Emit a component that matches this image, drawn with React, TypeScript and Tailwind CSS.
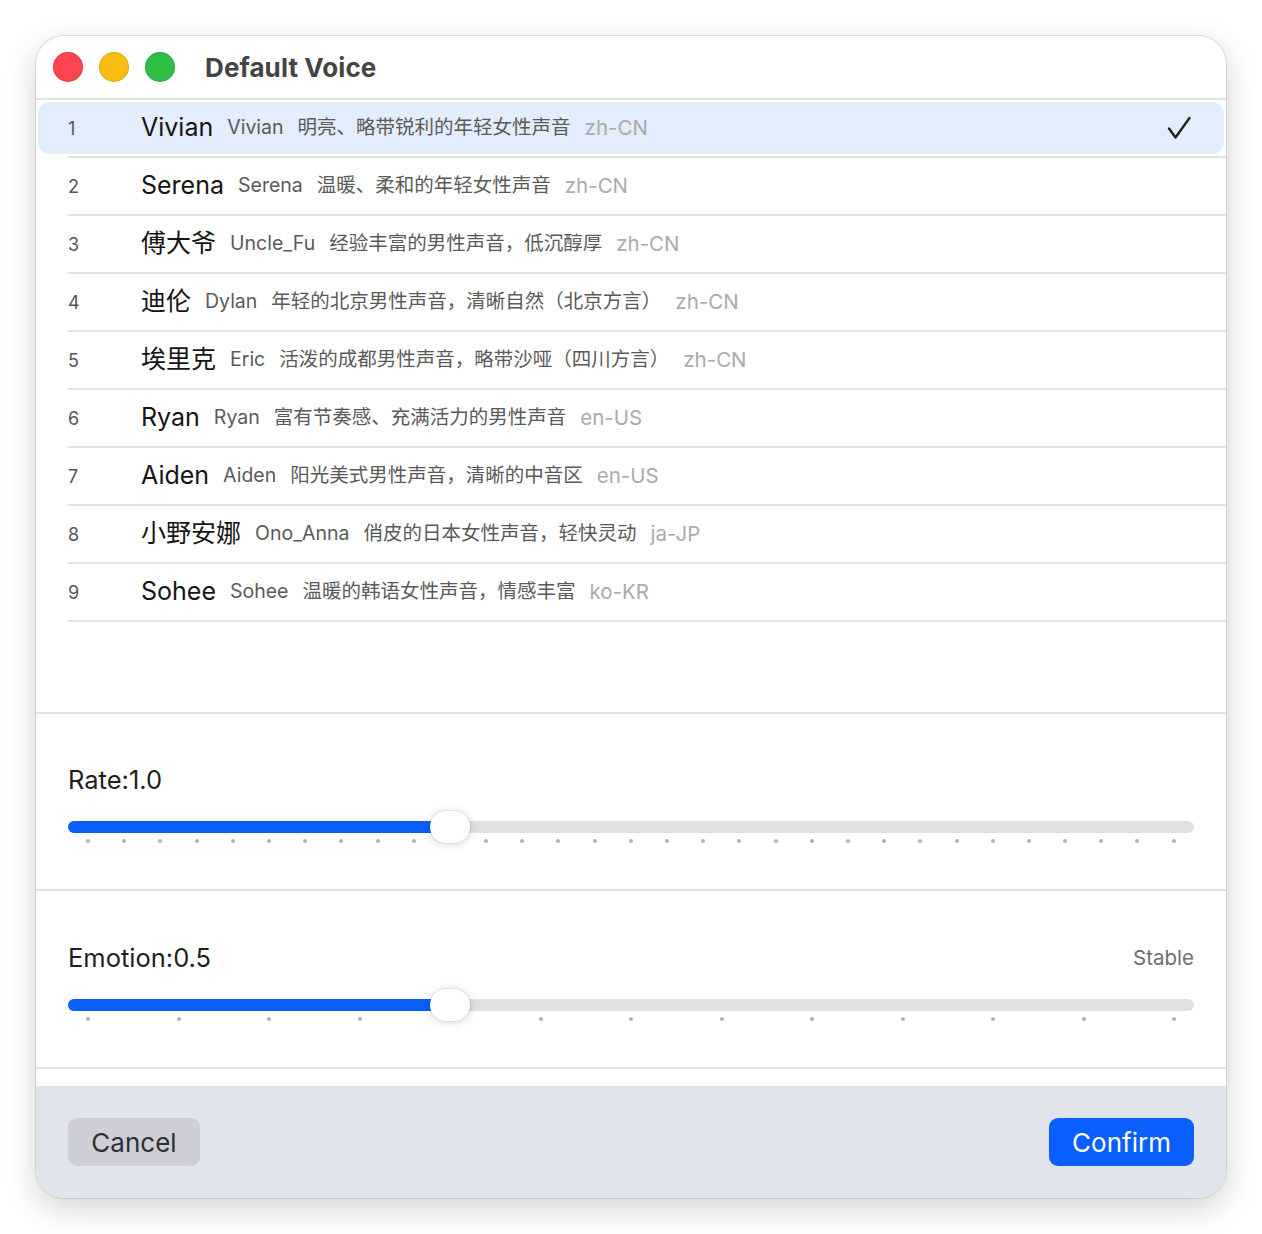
import React from "react";

type Voice = {
    name: string;
    id: string;
    desc: string;
    lang: string;
};

const voices: Voice[] = [
    { name: "Vivian", id: "Vivian", desc: "明亮、略带锐利的年轻女性声音", lang: "zh-CN" },
    { name: "Serena", id: "Serena", desc: "温暖、柔和的年轻女性声音", lang: "zh-CN" },
    { name: "傅大爷", id: "Uncle_Fu", desc: "经验丰富的男性声音，低沉醇厚", lang: "zh-CN" },
    { name: "迪伦", id: "Dylan", desc: "年轻的北京男性声音，清晰自然（北京方言）", lang: "zh-CN" },
    { name: "埃里克", id: "Eric", desc: "活泼的成都男性声音，略带沙哑（四川方言）", lang: "zh-CN" },
    { name: "Ryan", id: "Ryan", desc: "富有节奏感、充满活力的男性声音", lang: "en-US" },
    { name: "Aiden", id: "Aiden", desc: "阳光美式男性声音，清晰的中音区", lang: "en-US" },
    { name: "小野安娜", id: "Ono_Anna", desc: "俏皮的日本女性声音，轻快灵动", lang: "ja-JP" },
    { name: "Sohee", id: "Sohee", desc: "温暖的韩语女性声音，情感丰富", lang: "ko-KR" },
];

const font = { fontFamily: '"Inter", "Noto Sans CJK SC", sans-serif' };

function Slider({ ticks, value }: { ticks: number; value: number }) {
    // track is 1126 wide, thumb 40 wide -> usable 1086
    const center = 20 + value * 1086;
    return (
        <div className="relative h-[32px] w-full">
            <div className="absolute left-0 right-0 top-[10px] h-[12px] rounded-full bg-[#e0e0e0]"></div>
            <div className="absolute left-0 top-[10px] h-[12px] rounded-l-full bg-[#0a5ffb]" style={{ width: center }}></div>
            <div className="absolute left-[18px] right-[18px] top-[28px] flex justify-between">
                {Array.from({ length: ticks }).map((_, i) => (
                    <span key={i} className="block h-[4px] w-[4px] rounded-full bg-[#b3b3b3]"></span>
                ))}
            </div>
            <div
                className="absolute top-0 h-[32px] w-[40px] rounded-full bg-white shadow-[0_1px_8px_rgba(0,0,0,0.18)] ring-1 ring-black/5"
                style={{ left: center - 20 }}
            ></div>
        </div>
    );
}

export default function App() {
    return (
        <div className="h-[1234px] w-full bg-white p-[36px]" style={font}>
            <div className="flex h-[1162px] w-[1190px] flex-col overflow-hidden rounded-[28px] bg-white shadow-[0_10px_32px_rgba(0,0,0,0.18)] ring-1 ring-black/10">
                {/* title bar */}
                <div className="flex h-[64px] shrink-0 items-center border-b-2 border-[#e2e2e2] pl-[18px]">
                    <div className="flex gap-[18px]">
                        <span className="block h-[28px] w-[28px] rounded-full bg-[#fe4450] ring-1 ring-[#e23540]"></span>
                        <span className="block h-[28px] w-[28px] rounded-full bg-[#f8bc12] ring-1 ring-[#e0a90c]"></span>
                        <span className="block h-[28px] w-[28px] rounded-full bg-[#2ebe46] ring-1 ring-[#22a83a]"></span>
                    </div>
                    <span className="ml-[31px] text-[26px] font-bold tracking-[0.1px] text-[#444]">Default Voice</span>
                </div>

                {/* voice list */}
                <div className="h-[612px] shrink-0">
                    {voices.map((v, i) => (
                        <div key={v.id}>
                            <div className={"mx-[2px] mt-[2px] flex h-[52px] items-center rounded-[12px] pl-[30px] pr-[32px] " + (i === 0 ? "bg-[#e2edfd]" : "")}>
                                <span className="w-[73px] text-[18px] text-[#555]">{i + 1}</span>
                                <div className="flex items-center gap-[14px]">
                                    <span className="text-[25px] text-[#151515]">{v.name}</span>
                                    <span className="text-[19.5px] text-[#5a5a5a]">{v.id}</span>
                                    <span className="text-[19.5px] text-[#5a5a5a]">{v.desc}</span>
                                    <span className="text-[20.5px] text-[#ababab]">{v.lang}</span>
                                </div>
                                {i === 0 && (
                                    <svg className="ml-auto" width="26" height="24" viewBox="0 0 26 24" fill="none">
                                        <path d="M3 12.5 L9.5 21.5 L23.5 2" stroke="#222" strokeWidth="2.4" strokeLinecap="round" strokeLinejoin="round" />
                                    </svg>
                                )}
                            </div>
                            <div className="ml-[32px] mt-[2px] h-[2px] bg-[#e2e2e2]"></div>
                        </div>
                    ))}
                </div>

                <div className="h-[2px] shrink-0 bg-[#e2e2e2]"></div>

                {/* rate */}
                <div className="h-[175px] shrink-0 px-[32px] pt-[51px]">
                    <div className="text-[25.5px] leading-[30px] text-[#1e1e1e]">Rate:1.0</div>
                    <div className="mt-[16px]">
                        <Slider ticks={31} value={10 / 30} />
                    </div>
                </div>

                <div className="h-[2px] shrink-0 bg-[#e2e2e2]"></div>

                {/* emotion */}
                <div className="h-[176px] shrink-0 px-[32px] pt-[52px]">
                    <div className="flex items-center justify-between">
                        <span className="text-[25.5px] leading-[30px] text-[#1e1e1e]">Emotion:0.5</span>
                        <span className="text-[20.5px] text-[#6e6e6e]">Stable</span>
                    </div>
                    <div className="mt-[15px]">
                        <Slider ticks={13} value={4 / 12} />
                    </div>
                </div>

                <div className="h-[2px] shrink-0 bg-[#e2e2e2]"></div>
                <div className="h-[17px] shrink-0"></div>

                {/* footer */}
                <div className="flex h-[112px] shrink-0 items-start justify-between bg-[#e1e4ec] px-[32px] pt-[32px]">
                    <button className="flex h-[48px] w-[132px] items-center justify-center rounded-[9px] bg-[#cdced8] text-[26px] text-[#2f2f2f]">
                        Cancel
                    </button>
                    <button className="flex h-[48px] w-[145px] items-center justify-center rounded-[9px] bg-[#0a60ff] text-[26px] text-white">
                        Confirm
                    </button>
                </div>
            </div>
        </div>
    );
}
